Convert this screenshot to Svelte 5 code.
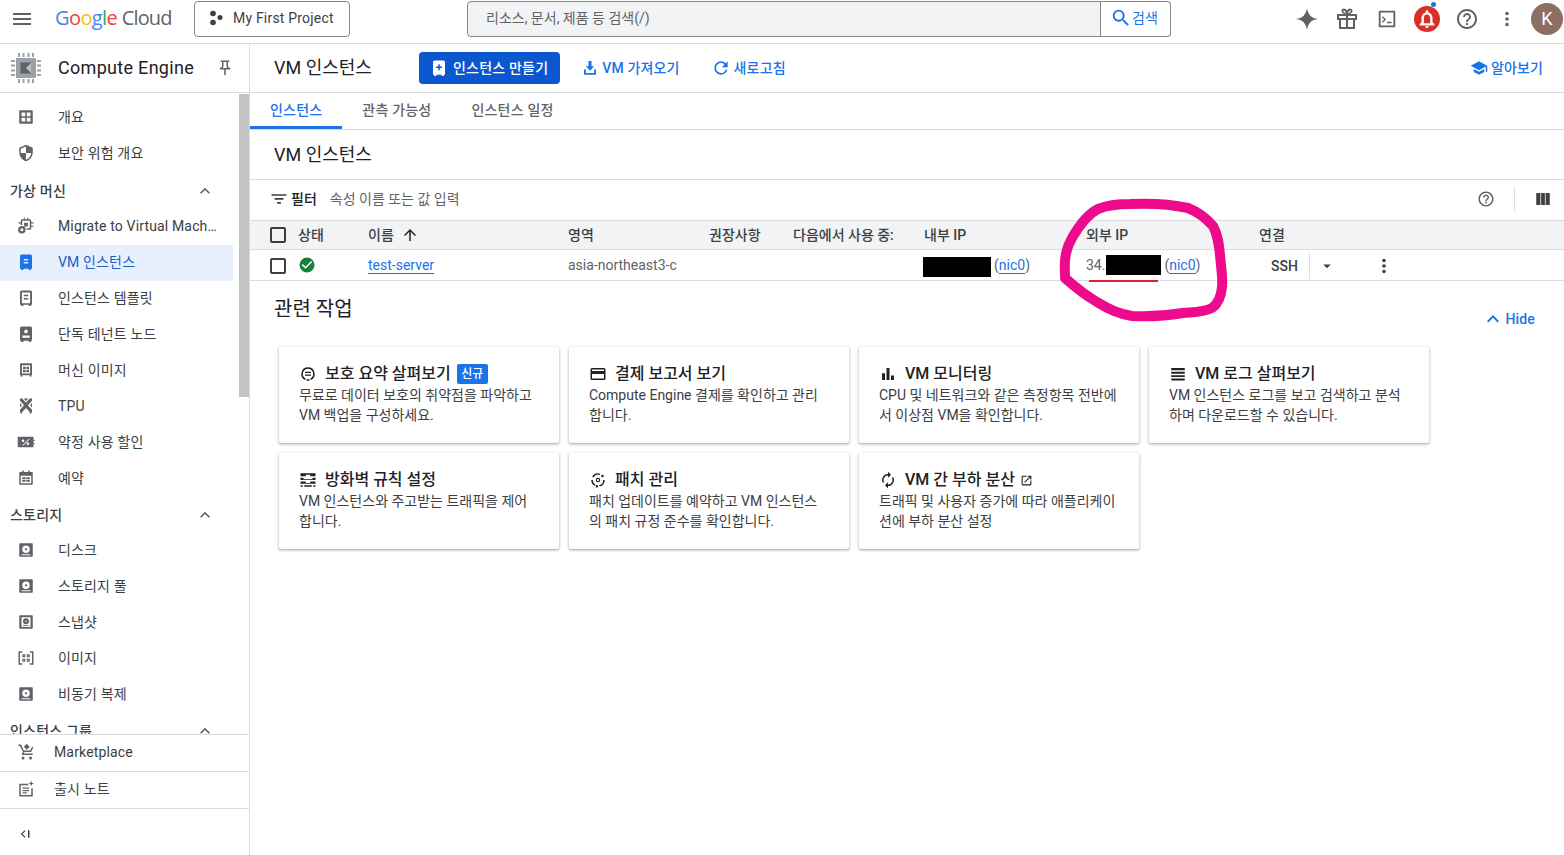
<script>
  const icons = {
    menu: 'M3 18h18v-2H3v2zm0-5h18v-2H3v2zm0-7v2h18V6H3z',
    search: 'M15.5 14h-.79l-.28-.27A6.47 6.47 0 0 0 16 9.5 6.5 6.5 0 1 0 9.5 16c1.61 0 3.09-.59 4.23-1.57l.27.28v.79l5 4.99L20.49 19l-4.99-5zm-6 0C7.01 14 5 11.99 5 9.5S7.01 5 9.5 5 14 7.01 14 9.5 11.99 14 9.5 14z',
    help: 'M11 18h2v-2h-2v2zm1-16C6.48 2 2 6.48 2 12s4.48 10 10 10 10-4.48 10-10S17.52 2 12 2zm0 18c-4.41 0-8-3.59-8-8s3.59-8 8-8 8 3.59 8 8-3.59 8-8 8zm0-14c-2.21 0-4 1.79-4 4h2c0-1.1.9-2 2-2s2 .9 2 2c0 2-3 1.75-3 5h2c0-2.25 3-2.5 3-5 0-2.21-1.79-4-4-4z',
    dots: 'M12 8a2 2 0 1 0 0-4 2 2 0 0 0 0 4zm0 2a2 2 0 1 0 0 4 2 2 0 0 0 0-4zm0 6a2 2 0 1 0 0 4 2 2 0 0 0 0-4z',
    spark: 'M12 1c.7 6.4 4.6 10.3 11 11-6.4.7-10.3 4.6-11 11-.7-6.4-4.6-10.3-11-11 6.4-.7 10.3-4.6 11-11z',
    gift: 'M2 7h7.2C7.6 6.4 6.500 5.200 6.500 4c0-1.400 1.100-2.500 2.500-2.500 1.300 0 2.300.8 3 2.100.7-1.300 1.700-2.100 3-2.100 1.400 0 2.500 1.100 2.500 2.500 0 1.200-1.100 2.400-2.700 3H22v6h-2v9H4v-9H2zM4 9v2h7V9zM13 9v2h7V9zM6 13v7h5v-7zM13 13v7h5v-7zM8.900 3.500c-.4 0-.7.200-.7.600 0 .7 1.300 1.900 2.800 2.300-.4-1.500-1.200-2.900-2.100-2.900zM15.100 3.500c-.9 0-1.700 1.400-2.100 2.900 1.500-.4 2.800-1.600 2.800-2.300 0-.4-.3-.6-.7-.6z',
    terminal: 'M4 3h16a1 1 0 0 1 1 1v16a1 1 0 0 1-1 1H4a1 1 0 0 1-1-1V4a1 1 0 0 1 1-1zM5 5v14h14V5zM7.500 9 11 12.500 7.500 16l-1-1 2.500-2.500L6.500 10zM12 15h5v1.500h-5z',
    bell: 'M12 2.500c.9 0 1.500.7 1.500 1.500v.8c2.800.7 4.500 3.100 4.500 6.200v4.500l2 2V19H4v-1.500l2-2V11c0-3.100 1.700-5.500 4.500-6.200V4c0-.8.6-1.500 1.500-1.500zM8.500 16.500h7V11c0-2.300-1.500-4-3.500-4s-3.500 1.700-3.500 4zM10 20h4a2 2 0 0 1-4 0z',
    pin: 'M14 4v5c0 1.120.37 2.160 1 3H9c.65-.86 1-1.900 1-3V4h4m3-2H7c-.55 0-1 .45-1 1s.45 1 1 1h1v5c0 1.660-1.340 3-3 3v2h5.970v7l1 1 1-1v-7H19v-2c-1.660 0-3-1.340-3-3V4h1c.55 0 1-.45 1-1s-.45-1-1-1z',
    chevron: 'M12 8l-6 6 1.410 1.410L12 10.830l4.590 4.580L18 14z',
    add: 'M6 2h12a2 2 0 0 1 2 2v17h-1.500v1.500h-3V21h-7v1.500h-3V21H4V4a2 2 0 0 1 2-2zM11 7v3H8v2h3v3h2v-3h3v-2h-3V7z',
    upload: 'M10 2.500h4v7h3.500L12 15.500 6.500 9.500H10zM4 14h2.500v4.500h11V14H20v7H4z',
    refresh: 'M17.650 6.350A7.960 7.960 0 0 0 12 4a8 8 0 1 0 7.730 10h-2.080A5.990 5.990 0 0 1 12 18a6 6 0 1 1 0-12c1.660 0 3.140.69 4.220 1.780L13 11h7V4l-2.350 2.350z',
    school: 'M5 13.180v4L12 21l7-3.820v-4L12 17l-7-3.820zM12 3 1 9l11 6 9-4.910V17h2V9L12 3z',
    filter: 'M2 5.500h20v2.300H2zM6 10.800h12v2.300H6zM9.500 16h5v2.300h-5z',
    columns: 'M3 4h5.500v16H3zM9.500 4h5v16h-5zM15.500 4H21v16h-5.500z',
    up: 'M4 12l1.410 1.410L11 7.830V20h2V7.830l5.580 5.590L20 12l-8-8-8 8z',
    check: 'M12 2a10 10 0 1 0 0 20 10 10 0 0 0 0-20zM10 17l-5-5 1.410-1.410L10 14.170l7.590-7.590L19 8z',
    caret: 'M7 10l5 5 5-5z',
    overview: 'M4 3h16a1 1 0 0 1 1 1v16a1 1 0 0 1-1 1H4a1 1 0 0 1-1-1V4a1 1 0 0 1 1-1zM6 6v5h5V6zM13 6v5h5V6zM6 13v5h5v-5zM13 13v5h5v-5z',
    shield: 'M12 1 3 5v6c0 5.550 3.840 10.740 9 12 5.160-1.260 9-6.450 9-12V5l-9-4zm0 10.990h7c-.53 4.120-3.280 7.790-7 8.940V12H5V6.300l7-3.110v8.800z',
    migrate: 'M9 1h1.500v2h3V1H15v2h2a2 2 0 0 1 2 2v2h3v1.500h-3v3h3V13h-3v2a2 2 0 0 1-2 2h-4v-2h4V5H7v5.500H5V8.500H2V7h3V5a2 2 0 0 1 2-2h2zM9.500 7.500h5v5h-5zM6.500 12a5 5 0 1 1 0 10 5 5 0 0 1 0-10zM6.500 15a2 2 0 1 0 0 4 2 2 0 0 0 0-4z',
    vm: 'M6 2h12a2 2 0 0 1 2 2v17h-1.500v1.500h-3V21h-7v1.500h-3V21H4V4a2 2 0 0 1 2-2zM9 8v2h6V8zM9 12v2h6v-2z',
    template: 'M6 2h12a2 2 0 0 1 2 2v17h-1.500v1.500h-3V21h-7v1.500h-3V21H4V4a2 2 0 0 1 2-2zM6.500 4.500V19h11V4.500zM9 7.500h6v2H9zM9 12h6v2H9z',
    tenant: 'M6 2h12a2 2 0 0 1 2 2v17h-1.500v1.500h-3V21h-7v1.500h-3V21H4V4a2 2 0 0 1 2-2zM12 6a2.500 2.500 0 1 0 0 5 2.500 2.500 0 0 0 0-5zM7 14v3h10v-3z',
    image: 'M5 3h14a1 1 0 0 1 1 1v15h-1v2h-2v-2H7v2H5v-2H4V4a1 1 0 0 1 1-1zM6.500 5.500v11h11v-11zM8 7.500h3.500v3.500H8zM12.500 7.500H16V11h-3.500zM8 12h3.500v3H8zM12.500 12H16v3h-3.500z',
    tpu: 'M4 2h3l5 5.500L17 2h3v3l-5.500 6 5.500 6v3.500h-1V22h-2v-2l-5-5.500L7 20v2H5v-1.500H4V17l5.500-6L4 5zM4 8l2.500 3L4 14zM20 8v6l-2.500-3zM9 2h6l-3 3.500z',
    percent: 'M1 5h21v4h1.500v1.500H22v3h1.500V15H22v4H1zM8 8.500a1.700 1.700 0 1 0 0 3.400 1.700 1.700 0 0 0 0-3.400zM14.500 12.500a1.700 1.700 0 1 0 0 3.400 1.700 1.700 0 0 0 0-3.400zM15.500 8 7 16.500h1.500L17 8z',
    calendar: 'M7 2h2v2h6V2h2v2h3a1 1 0 0 1 1 1v15a1 1 0 0 1-1 1H4a1 1 0 0 1-1-1V5a1 1 0 0 1 1-1h3zM5 9v10h14V9zM7 11h4.500v2.500H7zM12.500 11H17v2.500h-4.500zM7 14.500h4.500V17H7zM12.500 14.500H17V17h-4.500z',
    disk: 'M4 3h16a1 1 0 0 1 1 1v16a1 1 0 0 1-1 1H4a1 1 0 0 1-1-1V4a1 1 0 0 1 1-1zM12 6a5 5 0 1 0 0 10 5 5 0 0 0 0-10zM12 9.500a1.500 1.500 0 1 1 0 3 1.500 1.500 0 0 1 0-3zM6 17.500v1.500h12v-1.500z',
    snapshot: 'M4 3h16a1 1 0 0 1 1 1v16a1 1 0 0 1-1 1H4a1 1 0 0 1-1-1V4a1 1 0 0 1 1-1zM6 5.500v13h12v-13zM12 7a4 4 0 1 1 0 8 4 4 0 0 1 0-8zM12 10a1 1 0 1 0 0 2 1 1 0 0 0 0-2zM8 16h8v1H8z',
    images: 'M2 3h5v2H4v14h3v2H2zM17 3h5v18h-5v-2h3V5h-3zM7 7h4v4H7zM13 7h4v4h-4zM7 13h4v4H7zM13 13h4v4h-4zM8.500 8.500v1h1v-1zM14.500 8.500v1h1v-1zM8.500 14.500v1h1v-1zM14.500 14.500v1h1v-1z',
    cart: 'M13 1l4 4-4 4-4-4zM2 2h3.500l3.500 8h8.500l2.500-5 1.800 1-3 6H10l-1 2h12v2H6l2-4L4 4H2zM8 18a2 2 0 1 1 0 4 2 2 0 0 1 0-4zM18 18a2 2 0 1 1 0 4 2 2 0 0 1 0-4z',
    notes: 'M3 5h12v2H5v13h14v-9h2v11H3zM7.500 10H16v1.700H7.500zM7.500 13.200H16v1.700H7.500zM7.500 16.400H13v1.700H7.500zM19 1l1 2.500 2.500 1-2.500 1L19 8l-1-2.500-2.500-1 2.500-1z',
    collapse: 'M11.500 7 6.500 12l5 5 1.100-1.100L8.700 12l3.900-3.900zM16 7h2v10h-2z',
    protect: 'M12 3a9 9 0 0 1 4 17l-1-1.700A7 7 0 1 0 9 18.300L8 20A9 9 0 0 1 12 3zM8 9h8v1.800H8zM8 12.500h8v1.800H8zM10 19h4v2h-4z',
    billing: 'M4 4h16a2 2 0 0 1 2 2v12a2 2 0 0 1-2 2H4a2 2 0 0 1-2-2V6a2 2 0 0 1 2-2zM4 12v6h16v-6zM4 6v2h16V6z',
    bars: 'M4 11h4v9H4zM10 4h4v16h-4zM16 14h4v6h-4z',
    lines: 'M3 4h18v3H3zM3 9h18v2.500H3zM3 13.500h18V16H3zM3 18h18v2.500H3z',
    firewall: 'M2 3h20v4h-7V5H9v2H2zM2 9h4v2h12V9h4v3H2zM2 14h7v2h6v-2h7v3H2zM2 19h3v2H2zM7 19h10v2H7zM19 19h3v2h-3z',
    patch: 'M12 3a9 9 0 0 1 3 .5l-.6 1.800A7 7 0 0 0 6 8.500L4.300 7.500A9 9 0 0 1 12 3zM18 5a1.700 1.700 0 1 1 0 3.400A1.700 1.700 0 0 1 18 5zM21 12a9 9 0 0 1-7 8.800l-.4-1.900A7 7 0 0 0 19 12zM3 12h2a7 7 0 0 0 3.500 6L7.500 19.800A9 9 0 0 1 3 12zM10.500 18.500a1.700 1.700 0 1 1 0 3.400 1.700 1.700 0 0 1 0-3.400zM12 9a3 3 0 1 1 0 6 3 3 0 0 1 0-6zM12 10.500a1.500 1.500 0 1 0 0 3 1.500 1.500 0 0 0 0-3z',
    balance: 'M12 6v3l4-4-4-4v3a8 8 0 0 0-6.760 12.260l1.460-1.460A5.870 5.870 0 0 1 6 12a6 6 0 0 1 6-6zm6.760 1.740-1.460 1.460c.44.84.7 1.790.7 2.800a6 6 0 0 1-6 6v-3l-4 4 4 4v-3a8 8 0 0 0 6.760-12.260z',
    external: 'M19 19H5V5h7V3H5a2 2 0 0 0-2 2v14a2 2 0 0 0 2 2h14c1.100 0 2-.9 2-2v-7h-2v7zM14 3v2h3.590l-9.830 9.830 1.410 1.410L19 6.410V10h2V3h-7z'
  };

  const groups = [
    { items: [['overview', '개요'], ['shield', '보안 위험 개요']] },
    {
      label: '가상 머신',
      items: [
        ['migrate', 'Migrate to Virtual Machines'],
        ['vm', 'VM 인스턴스', true],
        ['template', '인스턴스 템플릿'],
        ['tenant', '단독 테넌트 노드'],
        ['image', '머신 이미지'],
        ['tpu', 'TPU'],
        ['percent', '약정 사용 할인'],
        ['calendar', '예약']
      ]
    },
    {
      label: '스토리지',
      items: [['disk', '디스크'], ['disk', '스토리지 풀'], ['snapshot', '스냅샷'], ['images', '이미지'], ['disk', '비동기 복제']]
    },
    { label: '인스턴스 그룹', items: [] }
  ];

  const columns = ['이름', '영역', '권장사항', '다음에서 사용 중:', '내부 IP', '외부 IP', '연결'];

  const cards = [
    { icon: 'protect', title: '보호 요약 살펴보기', badge: '신규', lines: ['무료로 데이터 보호의 취약점을 파악하고', 'VM 백업을 구성하세요.'] },
    { icon: 'billing', title: '결제 보고서 보기', lines: ['Compute Engine 결제를 확인하고 관리', '합니다.'] },
    { icon: 'bars', title: 'VM 모니터링', lines: ['CPU 및 네트워크와 같은 측정항목 전반에', '서 이상점 VM을 확인합니다.'] },
    { icon: 'lines', title: 'VM 로그 살펴보기', lines: ['VM 인스턴스 로그를 보고 검색하고 분석', '하며 다운로드할 수 있습니다.'] },
    { icon: 'firewall', title: '방화벽 규칙 설정', lines: ['VM 인스턴스와 주고받는 트래픽을 제어', '합니다.'] },
    { icon: 'patch', title: '패치 관리', lines: ['패치 업데이트를 예약하고 VM 인스턴스', '의 패치 규정 준수를 확인합니다.'] },
    { icon: 'balance', title: 'VM 간 부하 분산', external: true, lines: ['트래픽 및 사용자 증가에 따라 애플리케이', '션에 부하 분산 설정'] }
  ];
</script>

{#snippet icon(name, size = 24)}
  <svg class="icon" width={size} height={size} viewBox="0 0 24 24" fill="currentColor" fill-rule="evenodd"><path d={icons[name]} /></svg>
{/snippet}

<div class="page">
  <header class="topbar">
    <span class="menu">{@render icon('menu')}</span>
    <span class="logo"><b class="c1">G</b><b class="c2">o</b><b class="c3">o</b><b class="c1">g</b><b class="c4">l</b><b class="c2">e</b> <span class="cloud">Cloud</span></span>
    <button class="project">
      <svg width="16" height="16" viewBox="0 0 16 16" fill="#3c4043"><circle cx="4" cy="3.500" r="2.800" /><circle cx="11" cy="7.500" r="2.500" /><circle cx="4" cy="12.500" r="2.800" /></svg>
      My First Project
    </button>
    <div class="search">
      <div class="search-input">리소스, 문서, 제품 등 검색(/)</div>
      <button class="search-btn">{@render icon('search', 22)}검색</button>
    </div>
    <div class="top-actions">
      <span class="action">{@render icon('spark', 24)}</span>
      <span class="action">{@render icon('gift', 24)}</span>
      <span class="action">{@render icon('terminal', 22)}</span>
      <span class="action bell">{@render icon('bell', 22)}<i class="bell-dot"></i></span>
      <span class="action">{@render icon('help', 24)}</span>
      <span class="action">{@render icon('dots', 22)}</span>
      <span class="avatar">K</span>
    </div>
  </header>

  <div class="body">
    <aside class="sidebar">
      <div class="side-head">
        <svg class="chip" width="30" height="30" viewBox="0 0 30 30">
          <rect x="5" y="5" width="20" height="20" fill="#9aa0a6" />
          <rect x="9.500" y="9.500" width="11" height="11" fill="#5f6368" />
          <path d="M20.500 9.500 15 15l5.500 5.500z" fill="#bdc1c6" />
          <path d="M8 0v4M12.500 0v4M17.500 0v4M22 0v4M8 26v4M12.500 26v4M17.500 26v4M22 26v4M0 8h4M0 12.500h4M0 17.500h4M0 22h4M26 8h4M26 12.500h4M26 17.500h4M26 22h4" stroke="#9aa0a6" stroke-width="2" />
        </svg>
        <span class="side-title">Compute Engine</span>
        <span class="pin">{@render icon('pin', 18)}</span>
      </div>

      <nav class="side-nav">
        {#each groups as group}
          {#if group.label}
            <div class="group-label"><span>{group.label}</span>{@render icon('chevron', 20)}</div>
          {/if}
          {#each group.items as item}
            <div class="nav-item" class:selected={item[2]}>
              {@render icon(item[0], 18)}
              <span class="nav-text">{item[1]}</span>
            </div>
          {/each}
        {/each}
        <div class="thumb"></div>
      </nav>

      <div class="side-foot">{@render icon('cart', 18)}<span>Marketplace</span></div>
      <div class="side-foot">{@render icon('notes', 18)}<span>출시 노트</span></div>
      <div class="side-collapse">{@render icon('collapse', 18)}</div>
    </aside>

    <main class="main">
      <div class="main-head">
        <h1>VM 인스턴스</h1>
        <button class="primary">{@render icon('add', 18)}인스턴스 만들기</button>
        <button class="text-btn import">{@render icon('upload', 18)}VM 가져오기</button>
        <button class="text-btn refresh">{@render icon('refresh', 20)}새로고침</button>
        <button class="text-btn learn">{@render icon('school', 18)}알아보기</button>
      </div>

      <div class="tabs">
        <span class="tab active">인스턴스</span>
        <span class="tab">관측 가능성</span>
        <span class="tab">인스턴스 일정</span>
      </div>

      <div class="list-title"><h2>VM 인스턴스</h2></div>

      <div class="filter">
        {@render icon('filter', 18)}
        <span class="filter-label">필터</span>
        <span class="filter-hint">속성 이름 또는 값 입력</span>
        <span class="filter-help">{@render icon('help', 18)}</span>
        <span class="filter-div"></span>
        {@render icon('columns', 18)}
      </div>

      <div class="table-row table-head">
        <span class="box"></span>
        <span>상태</span>
        {#each columns as col, i}
          <span class="th">{col}{#if i === 0}<span class="sort">{@render icon('up', 18)}</span>{/if}</span>
        {/each}
      </div>
      <div class="table-row table-data">
        <span class="box"></span>
        <span class="status">{@render icon('check', 18)}</span>
        <span><a href="#top" class="link">test-server</a></span>
        <span class="zone">asia-northeast3-c</span>
        <span></span>
        <span></span>
        <span class="ip"><i class="redact internal"></i><span class="paren">(<a href="#top" class="link">nic0</a>)</span></span>
        <span class="ip"><span class="zone">34.</span><i class="redact external"></i><span class="paren">(<a href="#top" class="link">nic0</a>)</span></span>
        <span class="connect">
          <span class="ssh">SSH</span>
          <span class="ssh-caret">{@render icon('caret', 18)}</span>
          <span class="row-menu">{@render icon('dots', 22)}</span>
        </span>
      </div>

      <section class="related">
        <div class="related-head">
          <h2>관련 작업</h2>
          <button class="hide">{@render icon('chevron', 24)}Hide</button>
        </div>
        <div class="cards">
          {#each cards as card}
            <article class="card">
              <div class="card-title">
                {@render icon(card.icon, 18)}
                <span>{card.title}</span>
                {#if card.badge}<span class="badge">{card.badge}</span>{/if}
                {#if card.external}<span class="ext">{@render icon('external', 13)}</span>{/if}
              </div>
              {#each card.lines as line}
                <p>{line}</p>
              {/each}
            </article>
          {/each}
        </div>
      </section>
    </main>
  </div>

  <!-- hand-drawn annotation on the screenshot -->
  <svg class="scribble" width="200" height="150" viewBox="1050 190 200 150" fill="none">
    <path d="M1089 281H1158" stroke="#e3222b" stroke-width="2" />
    <path d="M1065 275C1064 258 1066 248 1072 238C1080 224 1088 214 1098 209C1108 205 1118 204 1130 204C1150 203 1170 204 1188 208C1198 212 1206 218 1213 226C1218 235 1219 245 1220 255C1221 268 1223 278 1222 287C1221 297 1218 304 1212 308C1205 312 1195 312 1183 313C1165 316 1150 317 1132 316C1118 314 1108 309 1097 302C1085 295 1075 287 1065 278" stroke="#ee0a8d" stroke-width="10" stroke-linecap="round" stroke-linejoin="round" />
  </svg>
</div>

<style>
  :global(body) {
    margin: 0;
    background: #fff;
    overflow: hidden;
  }
  .page {
    position: relative;
    display: flex;
    flex-direction: column;
    height: 855px;
    font-family: Roboto, 'Noto Sans CJK KR', sans-serif;
    font-size: 14px;
    line-height: 20px;
    color: #202124;
    overflow: hidden;
  }
  button {
    font: inherit;
    background: none;
    border: 0;
    padding: 0;
  }
  h1, h2, p {
    margin: 0;
    font-weight: 400;
  }
  .icon {
    flex-shrink: 0;
    display: block;
  }

  .topbar {
    display: flex;
    align-items: flex-start;
    height: 43px;
    border-bottom: 1px solid #dadce0;
    flex-shrink: 0;
  }
  .menu {
    margin: 7px 0 0 10px;
    color: #5f6368;
  }
  .logo {
    width: 139px;
    margin: 4px 0 0 21px;
    font-family: 'Open Sans', sans-serif;
    font-size: 20px;
    line-height: 28px;
    letter-spacing: -0.6px;
    color: #5f6368;
    white-space: nowrap;
  }
  .logo b { font-weight: 400; }
  .cloud { letter-spacing: -0.9px; }
  .c1 { color: #4285f4; }
  .c2 { color: #ea4335; }
  .c3 { color: #fbbc04; }
  .c4 { color: #34a853; }
  .project {
    display: flex;
    align-items: center;
    gap: 8px;
    box-sizing: border-box;
    width: 156px;
    height: 36px;
    margin-top: 1px;
    padding: 0 0 2px 14px;
    border: 1px solid #80868b;
    border-radius: 4px;
    color: #3c4043;
    letter-spacing: 0.2px;
    white-space: nowrap;
  }
  .project svg { flex-shrink: 0; }
  .search {
    display: flex;
    height: 36px;
    margin: 1px 0 0 117px;
  }
  .search-input {
    box-sizing: border-box;
    width: 634px;
    padding: 6px 18px;
    background: #f1f3f4;
    border: 1px solid #80868b;
    border-radius: 4px 0 0 4px;
    color: #5f6368;
  }
  .search-btn {
    display: flex;
    align-items: center;
    box-sizing: border-box;
    width: 70px;
    padding: 0 0 2px 9px;
    border: 1px solid #80868b;
    border-left: 0;
    border-radius: 0 4px 4px 0;
    color: #1a73e8;
  }
  .top-actions {
    display: flex;
    align-items: center;
    margin-left: auto;
    height: 38px;
    padding-right: 1px;
    color: #5f6368;
  }
  .action {
    position: relative;
    display: flex;
    align-items: center;
    justify-content: center;
    width: 40px;
    height: 38px;
  }
  .action.bell {
    width: 26px;
    height: 26px;
    margin: 0 7px;
    border-radius: 50%;
    background: #d93025;
    color: #fff;
  }
  .bell-dot {
    position: absolute;
    top: -4px;
    right: 4px;
    width: 5px;
    height: 5px;
    border-radius: 50%;
    background: #1a73e8;
  }
  .avatar {
    width: 32px;
    height: 32px;
    margin-left: 4px;
    border-radius: 50%;
    background: #8d6e63;
    color: #fff;
    font-size: 18px;
    line-height: 32px;
    text-align: center;
  }

  .body {
    display: flex;
    flex: 1;
    min-height: 0;
  }
  .sidebar {
    display: flex;
    flex-direction: column;
    box-sizing: border-box;
    width: 250px;
    border-right: 1px solid #dadce0;
    flex-shrink: 0;
  }
  .side-head {
    display: flex;
    align-items: center;
    height: 48px;
    padding-left: 11px;
    border-bottom: 1px solid #dadce0;
    flex-shrink: 0;
  }
  .side-title {
    margin-left: 17px;
    font-size: 18px;
    letter-spacing: 0.3px;
    color: #202124;
    white-space: nowrap;
  }
  .pin {
    margin-left: 22px;
    color: #5f6368;
  }
  .side-nav {
    position: relative;
    flex: 1;
    min-height: 0;
    padding-top: 7px;
    overflow: hidden;
  }
  .thumb {
    position: absolute;
    top: 1px;
    right: 0;
    width: 10px;
    height: 303px;
    background: #c4c4c4;
  }
  .group-label {
    display: flex;
    align-items: center;
    justify-content: space-between;
    width: 205px;
    height: 36px;
    padding: 0 34px 0 10px;
    font-weight: 500;
    letter-spacing: 0.2px;
    color: #3c4043;
  }
  .group-label .icon { color: #5f6368; }
  .nav-item {
    display: flex;
    align-items: center;
    gap: 23px;
    box-sizing: border-box;
    width: 233px;
    height: 36px;
    padding: 0 16px 2px 17px;
    letter-spacing: 0.15px;
    color: #3c4043;
  }
  .nav-item:nth-child(2) { margin-bottom: 1px; }
  .nav-item .icon { color: #5f6368; }
  .nav-item.selected {
    background: #e8f0fe;
    color: #1a5fc8;
  }
  .nav-item.selected .icon { color: #1a73e8; }
  .nav-text {
    overflow: hidden;
    white-space: nowrap;
    text-overflow: ellipsis;
  }
  .side-foot {
    display: flex;
    align-items: center;
    gap: 19px;
    height: 34px;
    padding: 0 0 2px 17px;
    border-top: 1px solid #dadce0;
    letter-spacing: 0.15px;
    color: #3c4043;
    flex-shrink: 0;
  }
  .side-foot .icon { color: #5f6368; }
  .side-collapse {
    display: flex;
    align-items: center;
    height: 42px;
    padding: 4px 0 0 16px;
    border-top: 1px solid #dadce0;
    color: #3c4043;
    flex-shrink: 0;
  }

  .main {
    flex: 1;
    min-width: 0;
  }
  .main-head {
    display: flex;
    align-items: center;
    height: 48px;
    padding: 0 21px 0 24px;
    border-bottom: 1px solid #dadce0;
  }
  h1, .list-title h2 {
    font-size: 18px;
    line-height: 24px;
    color: #202124;
  }
  .related-head h2 {
    font-size: 20px;
    line-height: 24px;
    color: #202124;
  }
  h1 { width: 145px; }
  .primary {
    display: flex;
    align-items: center;
    gap: 5px;
    height: 32px;
    padding: 0 12px 0 11px;
    background: #0b57d0;
    border-radius: 4px;
    color: #fff;
    font-weight: 500;
    letter-spacing: 0.2px;
    white-space: nowrap;
  }
  .text-btn {
    display: flex;
    align-items: center;
    gap: 3px;
    color: #1a73e8;
    font-weight: 500;
    letter-spacing: 0.15px;
    white-space: nowrap;
  }
  .import { margin-left: 21px; }
  .refresh { margin-left: 31px; }
  .learn { margin-left: auto; }

  .tabs {
    display: flex;
    height: 36px;
    border-bottom: 1px solid #dadce0;
  }
  .tab {
    box-sizing: border-box;
    height: 36px;
    padding: 7px 20px 0;
    color: #5f6368;
    font-weight: 500;
    letter-spacing: 0.2px;
  }
  .tab.active {
    color: #1a73e8;
    border-bottom: 3px solid #1a73e8;
  }
  .list-title {
    display: flex;
    align-items: center;
    height: 48px;
    padding: 1px 0 0 24px;
    border-bottom: 1px solid #dadce0;
  }
  .filter {
    display: flex;
    align-items: center;
    height: 38px;
    padding: 0 12px 2px 20px;
    color: #3c4043;
  }
  .filter-label {
    margin-left: 3px;
    font-weight: 500;
    color: #202124;
  }
  .filter-hint {
    margin-left: 13px;
    color: #5f6368;
  }
  .filter-help {
    margin-left: auto;
    color: #5f6368;
  }
  .filter-div {
    width: 1px;
    height: 24px;
    margin: 0 19px 0 19px;
    background: #dadce0;
  }

  .table-row {
    display: grid;
    grid-template-columns: 48px 70px 200px 141px 84px 131px 162px 173px 1fr;
    align-items: center;
    white-space: nowrap;
    border-bottom: 1px solid #dadce0;
  }
  .table-head {
    height: 28px;
    background: #f1f3f4;
    border-top: 1px solid #dadce0;
    font-weight: 500;
    color: #3c4043;
  }
  .th {
    display: flex;
    align-items: center;
  }
  .sort {
    margin-left: 7px;
    color: #202124;
  }
  .table-data {
    height: 27px;
    padding-bottom: 3px;
  }
  .box {
    box-sizing: border-box;
    width: 16px;
    height: 16px;
    margin-left: 20px;
    border: 2px solid #3c4043;
    border-radius: 2px;
  }
  .table-data .box { margin-top: 2px; }
  .status { color: #188038; }
  .link {
    color: #1a73e8;
    text-decoration: none;
    border-bottom: 1px solid #1a73e8;
  }
  .zone { color: #5f6368; }
  .ip {
    display: flex;
    align-items: center;
  }
  .redact {
    display: block;
    height: 20px;
    background: #000;
    flex-shrink: 0;
  }
  .internal { width: 68px; margin: 3px 0 0 -1px; }
  .external { width: 55px; margin-left: 1px; }
  .paren {
    margin-left: 3px;
    color: #5f6368;
  }
  .connect {
    display: flex;
    align-items: center;
    height: 28px;
    margin-top: 2px;
  }
  .ssh {
    box-sizing: border-box;
    width: 51px;
    height: 26px;
    padding: 3px 0 0 12px;
    border-right: 1px solid #dadce0;
    color: #3c4043;
    font-weight: 500;
  }
  .ssh-caret {
    margin-left: 8px;
    color: #3c4043;
  }
  .row-menu {
    margin-left: 37px;
    color: #3c4043;
  }

  .related {
    padding: 16px 29px 0 24px;
  }
  .related-head {
    display: flex;
    justify-content: space-between;
    height: 32px;
    margin-bottom: 18px;
  }
  .hide {
    display: flex;
    align-items: center;
    align-self: flex-end;
    gap: 1px;
    height: 20px;
    color: #1a73e8;
    font-weight: 500;
    letter-spacing: 0.15px;
  }
  .cards {
    display: grid;
    grid-template-columns: repeat(4, 280px);
    gap: 10px;
    margin-left: 5px;
  }
  .card {
    box-sizing: border-box;
    height: 96px;
    padding: 17px 10px 0 20px;
    background: #fff;
    border-radius: 2px;
    box-shadow: 0 1px 3px 1px rgba(60, 64, 67, 0.15), 0 1px 2px rgba(60, 64, 67, 0.3);
    color: #3c4043;
    white-space: nowrap;
  }
  .card-title {
    display: flex;
    align-items: center;
    gap: 8px;
    height: 20px;
    margin-bottom: 1px;
    font-size: 16px;
    font-weight: 500;
    color: #202124;
  }
  .badge {
    box-sizing: border-box;
    width: 31px;
    height: 20px;
    margin-left: -2px;
    background: #1a73e8;
    border-radius: 2px;
    color: #fff;
    font-size: 12px;
    line-height: 20px;
    text-align: center;
  }
  .ext { margin-left: -3px; }

  .scribble {
    position: absolute;
    left: 1050px;
    top: 190px;
    pointer-events: none;
  }
</style>
